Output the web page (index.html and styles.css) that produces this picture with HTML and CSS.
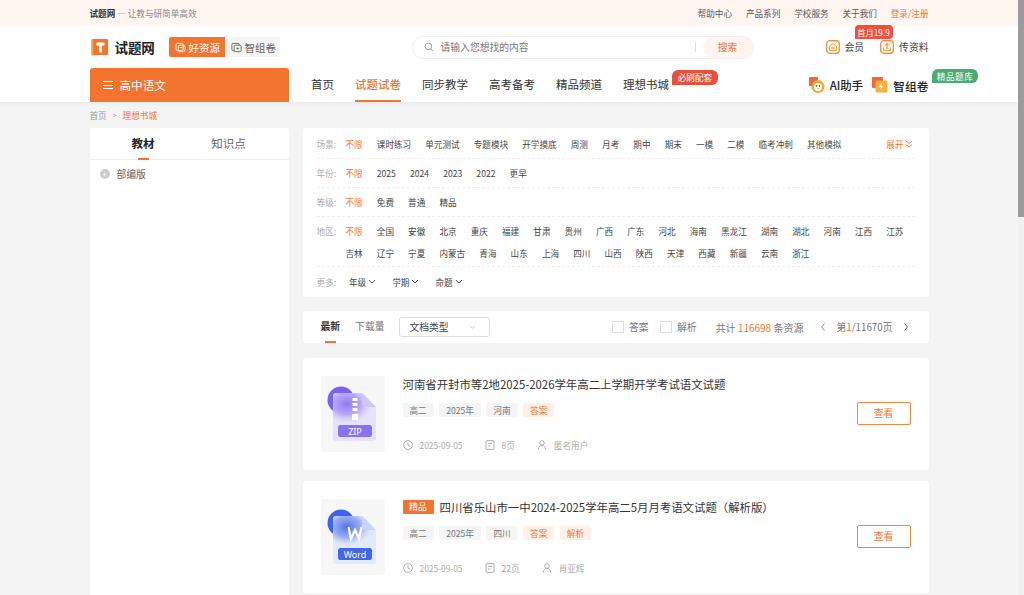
FILE: index.html
```html
<!DOCTYPE html>
<html lang="zh-CN">
<head>
<meta charset="utf-8">
<title>试题网</title>
<link rel="stylesheet" href="styles.css">
</head>
<body>
<div class="page">
  <div class="topbar"><div class="wrap topbar-in">
    <div class="slogan"><b>试题网</b> — 让教与研简单高效</div>
    <div class="toplinks"><span>帮助中心</span><span>产品系列</span><span>学校服务</span><span>关于我们</span><span class="orange">登录/注册</span></div>
  </div></div>

  <header class="head"><div class="wrap head-in">
    <svg class="logo" viewBox="0 0 18 18"><rect x="0" y="1" width="5" height="16.500" rx="1" fill="#f6b13d"/><rect x="2" y="1" width="15" height="16" rx="1" fill="#f2742f"/><path d="M5.500 4.500h8v3h-2.600v7H8.100v-7H5.500z" fill="#fff"/></svg>
    <span class="brand">试题网</span>
    <div class="switch">
      <span class="sw on"><svg viewBox="0 0 12 12" class="swi"><rect x="1" y="1.500" width="8" height="8" rx="2" fill="none" stroke="#fff" stroke-width="1"/><rect x="3.500" y="3.500" width="7.500" height="7" rx="2" fill="none" stroke="#fff" stroke-width="1"/><path d="M5 6h4" stroke="#fff"/></svg>好资源</span>
      <span class="sw"><svg viewBox="0 0 12 12" class="swi"><rect x="1" y="1.500" width="8" height="8" rx="1" fill="none" stroke="#666" stroke-width="1"/><rect x="3.500" y="3.500" width="7.500" height="7" rx="1" fill="#f5f5f5" stroke="#666" stroke-width="1"/><path d="M6 7h2.500M7.200 5.800v2.400" stroke="#666"/></svg>智组卷</span>
    </div>
    <div class="search">
      <svg class="sicon" viewBox="0 0 12 12"><circle cx="5.300" cy="5.300" r="4" fill="none" stroke="#888" stroke-width="1"/><path d="M8.300 8.300l2.500 2.500" stroke="#888" stroke-width="1"/></svg>
      <span class="ph">请输入您想找的内容</span>
      <i class="sep"></i>
      <span class="sbtn">搜索</span>
    </div>
    <div class="actions">
      <span class="act vip"><svg class="acti" viewBox="0 0 14 14"><rect x=".7" y=".7" width="12.600" height="12.600" rx="3" fill="#fff7ec" stroke="#f2853f" stroke-width="1.200"/><path d="M3.500 6L7 3.500 10.500 6v4.500h-7z" fill="none" stroke="#f0a93b"/><path d="M5.500 8h3" stroke="#f2742f"/></svg>会员<em class="bdg-red">首月19.9</em></span>
      <span class="act"><svg class="acti" viewBox="0 0 14 14"><rect x=".7" y=".7" width="12.600" height="12.600" rx="3" fill="#fff7ec" stroke="#f2853f" stroke-width="1.200"/><path d="M7 9V3.800M5 5.500l2-2 2 2" fill="none" stroke="#f2742f"/><path d="M3.500 7.500v3h7v-3" fill="none" stroke="#f0a93b"/></svg>传资料</span>
    </div>
  </div></header>

  <nav class="nav"><div class="wrap nav-in">
    <div class="cat"><span class="burger"><i></i><i></i><i></i></span>高中语文</div>
    <div class="menu">
      <span>首页</span><span class="active">试题试卷</span><span>同步教学</span><span>高考备考</span><span>精品频道</span><span class="hasb">理想书城<em class="bdg-must">必刷配套</em></span>
    </div>
    <div class="tools">
      <span class="tool t1"><svg class="tooli" viewBox="0 0 16 16"><rect x="0" y="0" width="9" height="9" rx="1" fill="#ef6a3a"/><circle cx="9" cy="9.500" r="6.500" fill="#f8a72c"/><circle cx="9" cy="10" r="4" fill="#fff"/><circle cx="7.500" cy="9" r=".8" fill="#333"/><circle cx="10.500" cy="9" r=".8" fill="#333"/><path d="M8 11h2l-1 1.300z" fill="#f2742f"/></svg>AI助手</span>
      <span class="tool t2"><svg class="tooli" viewBox="0 0 16 16"><rect x="0" y="0" width="11" height="11" rx="1" fill="#ef6a3a"/><rect x="3.500" y="3.500" width="12" height="12" rx="1.500" fill="#f6b13d"/><path d="M10 6l-3 4h2l-1 3 3-4H9z" fill="#fff"/></svg>智组卷<em class="bdg-green">精品题库</em></span>
    </div>
  </div></nav>

  <main class="wrap">
    <div class="crumb"><span>首页</span><span class="gt">&gt;</span><span class="orange">理想书城</span></div>
    <div class="cols">
      <aside class="side">
        <div class="tabs"><span class="tab on">教材</span><span class="tab">知识点</span></div>
        <div class="tree"><i class="dot">+</i>部编版</div>
      </aside>
      <section class="content">
        <div class="filters">
          <div class="frow"><span class="flabel">场景:</span><div class="fitems"><span class="orange">不限</span><span>课时练习</span><span>单元测试</span><span>专题模块</span><span>开学摸底</span><span>周测</span><span>月考</span><span>期中</span><span>期末</span><span>一模</span><span>二模</span><span>临考冲刺</span><span>其他模拟</span></div><span class="expand">展开 <svg viewBox="0 0 8 8" class="dbl"><path d="M1 1l3 2.500L7 1M1 4.500L4 7l3-2.500" fill="none" stroke="#f2742f" stroke-width=".9"/></svg></span></div>
          <div class="frow"><span class="flabel">年份:</span><div class="fitems"><span class="orange">不限</span><span>2025</span><span>2024</span><span>2023</span><span>2022</span><span>更早</span></div></div>
          <div class="frow"><span class="flabel">等级:</span><div class="fitems"><span class="orange">不限</span><span>免费</span><span>普通</span><span>精品</span></div></div>
          <div class="frow"><span class="flabel">地区:</span><div class="fitems"><span class="orange">不限</span><span>全国</span><span>安徽</span><span>北京</span><span>重庆</span><span>福建</span><span>甘肃</span><span>贵州</span><span>广西</span><span>广东</span><span>河北</span><span>海南</span><span>黑龙江</span><span>湖南</span><span>湖北</span><span>河南</span><span>江西</span><span>江苏</span><span>吉林</span><span>辽宁</span><span>宁夏</span><span>内蒙古</span><span>青海</span><span>山东</span><span>上海</span><span>四川</span><span>山西</span><span>陕西</span><span>天津</span><span>西藏</span><span>新疆</span><span>云南</span><span>浙江</span></div></div>
          <div class="frow last"><span class="flabel">更多:</span><div class="fmore"><span>年级<svg class="chev" viewBox="0 0 8 6"><path d="M1 1l3 3 3-3" fill="none" stroke="#555"/></svg></span><span>学期<svg class="chev" viewBox="0 0 8 6"><path d="M1 1l3 3 3-3" fill="none" stroke="#555"/></svg></span><span>命题<svg class="chev" viewBox="0 0 8 6"><path d="M1 1l3 3 3-3" fill="none" stroke="#555"/></svg></span></div></div>
        </div>

        <div class="sortbar">
          <span class="sort on">最新</span><span class="sort">下载量</span>
          <div class="select">文档类型<svg class="chev2" viewBox="0 0 8 6"><path d="M1 1l3 3 3-3" fill="none" stroke="#aaa" stroke-width=".8"/></svg></div>
          <div class="sort-r">
            <label class="chk"><i></i>答案</label>
            <label class="chk"><i></i>解析</label>
            <span class="total">共计 <b>116698</b> 条资源</span>
            <span class="pager"><svg class="arr" viewBox="0 0 6 10"><path d="M4.500 1.500L1.500 5l3 3.500" fill="none" stroke="#888"/></svg><span>第<b>1</b>/11670页</span><svg class="arr" viewBox="0 0 6 10"><path d="M1.500 1.500L4.500 5l-3 3.500" fill="none" stroke="#666"/></svg></span>
          </div>
        </div>

        <article class="card">
          <div class="thumb">
            <svg viewBox="0 0 64 76" class="thumbsvg"><defs><radialGradient id="zg" cx=".5" cy=".5" r=".5"><stop offset="0" stop-color="#8d76f3"/><stop offset=".55" stop-color="#a794f6" stop-opacity=".75"/><stop offset="1" stop-color="#c9bffa" stop-opacity="0"/></radialGradient><clipPath id="zc"><path d="M15 17h26l14 14v31a3 3 0 0 1-3 3H15a3 3 0 0 1-3-3V20a3 3 0 0 1 3-3z"/></clipPath></defs><circle cx="20" cy="24" r="13.500" fill="#7b63f0"/><path d="M15 17h26l14 14v31a3 3 0 0 1-3 3H15a3 3 0 0 1-3-3V20a3 3 0 0 1 3-3z" fill="#e6e2fc"/><g clip-path="url(#zc)"><ellipse cx="26" cy="28" rx="25" ry="19" fill="url(#zg)"/></g><path d="M41 17l14 14H44a3 3 0 0 1-3-3z" fill="#cfc6f8"/><path d="M31.500 22h5v3h-5zM31.500 27h5v3h-5zM31.500 32h5v3h-5zM31 38h6v6h-6z" fill="#fff"/><rect x="17" y="49" width="34" height="12" rx="2.500" fill="#8a72f2"/><text x="34" y="58.500" class="ftxt">ZIP</text></svg>
          </div>
          <div class="info">
            <h3 class="title">河南省开封市等2地2025-2026学年高二上学期开学考试语文试题</h3>
            <div class="tags"><span>高二</span><span>2025年</span><span>河南</span><span class="hot">答案</span></div>
            <div class="meta">
              <span class="m m1"><svg class="mi" viewBox="0 0 10 10"><circle cx="5" cy="5" r="4.400" fill="none" stroke="#999" stroke-width=".8"/><path d="M5 2.500V5.300l2 1" fill="none" stroke="#999" stroke-width=".8"/></svg>2025-09-05</span>
              <span class="m m2"><svg class="mi" viewBox="0 0 10 10"><rect x="1" y=".6" width="8" height="8.800" rx="1" fill="none" stroke="#999" stroke-width=".8"/><path d="M3 3.500h4M3 6h2.500" stroke="#999" stroke-width=".8"/></svg>8页</span>
              <span class="m"><svg class="mi" viewBox="0 0 10 10"><circle cx="5" cy="3" r="2.300" fill="none" stroke="#999" stroke-width=".8"/><path d="M1.200 9.500c.3-2.600 1.800-4 3.800-4s3.500 1.400 3.800 4" fill="none" stroke="#999" stroke-width=".8"/></svg>匿名用户</span>
            </div>
          </div>
          <span class="view">查看</span>
        </article>

        <article class="card card2">
          <div class="thumb">
            <svg viewBox="0 0 64 76" class="thumbsvg"><defs><radialGradient id="wg" cx=".5" cy=".5" r=".5"><stop offset="0" stop-color="#4d70ea"/><stop offset=".55" stop-color="#7f98f0" stop-opacity=".75"/><stop offset="1" stop-color="#bccafa" stop-opacity="0"/></radialGradient><clipPath id="wc"><path d="M15 17h26l14 14v31a3 3 0 0 1-3 3H15a3 3 0 0 1-3-3V20a3 3 0 0 1 3-3z"/></clipPath></defs><circle cx="20" cy="24" r="13.500" fill="#3f63e8"/><path d="M15 17h26l14 14v31a3 3 0 0 1-3 3H15a3 3 0 0 1-3-3V20a3 3 0 0 1 3-3z" fill="#e3e9fd"/><g clip-path="url(#wc)"><ellipse cx="26" cy="28" rx="25" ry="19" fill="url(#wg)"/></g><path d="M41 17l14 14H44a3 3 0 0 1-3-3z" fill="#c9d4f9"/><path d="M27.500 28l2.500 12 4-9 4 9 2.500-12" fill="none" stroke="#fff" stroke-width="2.200"/><rect x="17" y="49" width="34" height="12" rx="2.500" fill="#4467ea"/><text x="34" y="58.500" class="ftxt">Word</text></svg>
          </div>
          <div class="info">
            <h3 class="title"><em class="prem">精品</em>四川省乐山市一中2024-2025学年高二5月月考语文试题（解析版）</h3>
            <div class="tags"><span>高二</span><span>2025年</span><span>四川</span><span class="hot">答案</span><span class="hot">解析</span></div>
            <div class="meta">
              <span class="m m1"><svg class="mi" viewBox="0 0 10 10"><circle cx="5" cy="5" r="4.400" fill="none" stroke="#999" stroke-width=".8"/><path d="M5 2.500V5.300l2 1" fill="none" stroke="#999" stroke-width=".8"/></svg>2025-09-05</span>
              <span class="m m2"><svg class="mi" viewBox="0 0 10 10"><rect x="1" y=".6" width="8" height="8.800" rx="1" fill="none" stroke="#999" stroke-width=".8"/><path d="M3 3.500h4M3 6h2.500" stroke="#999" stroke-width=".8"/></svg>22页</span>
              <span class="m"><svg class="mi" viewBox="0 0 10 10"><circle cx="5" cy="3" r="2.300" fill="none" stroke="#999" stroke-width=".8"/><path d="M1.200 9.500c.3-2.600 1.800-4 3.800-4s3.500 1.400 3.800 4" fill="none" stroke="#999" stroke-width=".8"/></svg>肖亚辉</span>
            </div>
          </div>
          <span class="view">查看</span>
        </article>
      </section>
    </div>
  </main>
</div>
<div class="scrollbar"><div class="thumbbar"></div></div>
</body>
</html>
```
FILE: styles.css
```css
* { box-sizing: border-box; }
html, body { margin: 0; height: 595px; overflow: hidden; }
body { display: flex; font-family: "Noto Sans CJK SC", "Noto Sans", sans-serif; color: #333; background: #f4f4f4; }
em, i { font-style: normal; }
.page { flex: 1; min-width: 0; height: 595px; overflow: hidden; }
.scrollbar { width: 6px; flex: none; background: #f1f1f1; }
.thumbbar { height: 217px; background: #9b9b9b; }
.wrap { width: 839px; margin: 0 auto; }
.orange { color: #f2742f; }

.topbar { height: 26px; background: #fff5f1; }
.topbar-in { display: flex; justify-content: space-between; align-items: center; height: 26px; }
.slogan { font-size: 8.600px; color: #888; }
.slogan b { color: #333; }
.toplinks { display: flex; gap: 13.900px; font-size: 8.600px; color: #555; }

.head { height: 42px; background: #fff; }
.head-in { display: flex; align-items: center; height: 42px; }
.logo { width: 18px; height: 18px; margin-left: 1px; }
.brand { font-size: 13.500px; font-weight: 700; color: #222; margin-left: 6px; width: 54px; letter-spacing: -.1px; }
.switch { display: flex; height: 20px; }
.sw { display: flex; align-items: center; gap: 3px; width: 55px; padding-left: 6px; font-size: 10.500px; color: #666; background: #f5f5f5; border-radius: 0 2px 2px 0; }
.sw.on { width: 56px; color: #fff; background: #f2742f; border-radius: 2px 0 0 2px; }
.swi { width: 11px; height: 11px; flex: none; }
.search { display: flex; align-items: center; width: 342px; height: 23px; margin-left: 132px; border: 1px solid #eee; border-radius: 12px; }
.sicon { width: 10px; height: 10px; margin-left: 11px; }
.ph { flex: 1; margin-left: 7px; font-size: 9.800px; color: #777; }
.sep { width: 1px; height: 10px; background: #ddd; }
.sbtn { width: 50px; height: 21px; margin-left: 7px; font-size: 9.800px; line-height: 20px; text-align: center; color: #f2742f; background: #fff4ee; border-radius: 11px; }
.actions { display: flex; gap: 16px; margin-left: 72px; }
.act { position: relative; display: flex; align-items: center; gap: 5px; font-size: 9.800px; color: #444; }
.acti { width: 14px; height: 14px; }
.bdg-red { position: absolute; left: 29px; top: -15px; width: 38px; height: 14px; font-size: 8.300px; line-height: 14px; text-align: center; color: #fff; background: #ee4f3e; border-radius: 4px 4px 4px 0; white-space: nowrap; }

.nav { position: relative; height: 34px; background: #fff; box-shadow: 0 1px 4px rgba(0,0,0,.06); }
.nav-in { display: flex; height: 34px; }
.cat { display: flex; align-items: center; width: 199px; padding-left: 13px; font-size: 11.600px; color: #fff; background: #f2742f; border-radius: 3px 3px 0 0; }
.burger { display: flex; flex-direction: column; gap: 2.500px; width: 10px; margin-right: 7px; }
.burger i { height: 1px; background: #fff; }
.menu { display: flex; gap: 21px; margin-left: 22.400px; font-size: 11.500px; color: #333; }
.menu > span { position: relative; line-height: 33px; }
.menu .active { color: #f2742f; font-weight: 500; border-bottom: 2px solid #f2742f; height: 34px; }
.bdg-must { position: absolute; left: 49px; top: 2px; width: 46px; height: 15px; font-size: 8.600px; line-height: 15px; text-align: center; color: #fff; background: #e9503c; border-radius: 6px 6px 6px 0; white-space: nowrap; }
.tools { display: flex; align-items: center; gap: 9px; margin-left: auto; }
.tool { position: relative; display: flex; align-items: center; gap: 5px; font-weight: 500; color: #222; }
.t1 { font-size: 11.400px; }
.t2 { font-size: 11.800px; }
.tooli { width: 16px; height: 16px; }
.bdg-green { position: absolute; left: 60px; top: -8px; width: 46px; height: 14px; font-size: 8.600px; font-weight: 400; line-height: 14px; letter-spacing: .6px; text-align: center; color: #fff; background: #4caa75; border-radius: 6px 6px 6px 0; white-space: nowrap; }

.crumb { display: flex; align-items: center; gap: 6px; height: 26px; font-size: 8.600px; color: #999; }
.gt { font-size: 7px; }
.cols { display: flex; gap: 14px; }
.side { width: 199px; height: 500px; flex: none; background: #fff; border-radius: 3px 3px 0 0; }
.tabs { display: flex; height: 32px; border-bottom: 1px solid #eee; }
.tab { position: relative; font-size: 11.500px; line-height: 31px; text-align: center; color: #666; }
.tabs .tab:first-child { flex: 0 0 107px; }
.tabs .tab:last-child { flex: 0 0 64px; }
.tab.on { font-weight: 700; color: #222; }
.tab.on::after { content: ""; position: absolute; left: 48px; bottom: -1px; width: 11px; height: 2px; background: #f2742f; }
.tree { display: flex; align-items: center; height: 27px; padding-left: 10px; font-size: 9.800px; color: #666; }
.dot { width: 10px; height: 10px; margin-right: 7px; font-size: 8px; line-height: 10px; text-align: center; color: #fff; background: #ccc; border-radius: 50%; }

.content { flex: 1; min-width: 0; }
.filters { height: 169px; padding: 0 14px; background: #fff; border-radius: 3px; }
.frow { position: relative; display: flex; align-items: flex-start; width: 598px; height: 29px; padding-top: 6px; border-bottom: 1px dashed #eee; font-size: 8.600px; line-height: 16px; }
.frow:nth-child(1) { height: 31px; padding-top: 8px; }
.frow:nth-child(4) { height: 50px; }
.frow.last { border-bottom: 0; padding-top: 7px; }
.flabel { width: 29px; flex: none; color: #aaa; }
.fitems { display: flex; flex-wrap: wrap; gap: 6px 14.100px; width: 566px; color: #444; }
.expand { position: absolute; right: 2px; top: 8px; display: flex; align-items: center; gap: 1px; color: #f2742f; }
.dbl { width: 8px; height: 8px; }
.fmore { display: flex; gap: 16px; margin-left: 3.500px; color: #444; }
.fmore span { display: flex; align-items: center; gap: 2px; }
.chev { width: 8px; height: 6px; }

.sortbar { display: flex; align-items: center; height: 32px; margin-top: 14px; padding-left: 18px; font-size: 9.800px; color: #777; background: #fff; border-radius: 3px; }
.sort { position: relative; height: 32px; margin-right: 15px; line-height: 31px; }
.sort.on { font-weight: 700; color: #333; }
.sort.on::after { content: ""; position: absolute; left: 4px; bottom: 0; width: 11px; height: 2px; background: #f2742f; }
.select { display: flex; align-items: center; justify-content: space-between; width: 91px; height: 20px; padding: 0 9px; color: #444; border: 1px solid #ddd; border-radius: 3px; }
.chev2 { width: 7px; height: 5px; margin-right: 4px; }
.sort-r { display: flex; align-items: center; margin-left: auto; padding-right: 20px; }
.chk { display: flex; align-items: center; gap: 5px; margin-right: 11.500px; }
.chk i { width: 12px; height: 12px; border: 1px solid #ddd; border-radius: 1px; }
.chk:nth-child(2) { margin-right: 19px; }
.total { margin-right: 17px; font-size: 10px; }
.total b, .pager b { font-weight: 400; color: #f2742f; }
.pager { display: flex; align-items: center; gap: 10px; }
.arr { width: 6px; height: 10px; }

.card { display: flex; height: 112px; margin-top: 15px; padding: 18px; background: #fff; border-radius: 3px; }
.card2 { margin-top: 11px; }
.thumb { width: 64px; height: 76px; flex: none; background: #f7f7f7; border-radius: 3px; }
.thumbsvg { display: block; width: 64px; height: 76px; }
.ftxt { font-family: "Noto Sans", sans-serif; font-size: 9px; fill: #fff; text-anchor: middle; }
.info { flex: 1; margin-left: 18px; }
.title { display: flex; align-items: center; height: 18px; margin: -1px 0 0; font-size: 11.400px; font-weight: 400; line-height: 18px; color: #333; }
.prem { width: 31px; height: 14px; margin-right: 6px; font-size: 9px; line-height: 14px; text-align: center; color: #fff; background: #f2742f; border-radius: 1px; }
.tags { display: flex; gap: 5.500px; margin-top: 10px; }
.tags span { height: 14px; padding: 0 7px; font-size: 8.600px; line-height: 14px; color: #777; background: #f5f5f5; border-radius: 2px; }
.tags .hot { color: #f2742f; background: #fff0e8; }
.meta { display: flex; align-items: center; margin-top: 22px; font-size: 8.600px; color: #aaa; }
.m { display: flex; align-items: center; gap: 7px; }
.m1 { margin-right: 22px; font-size: 8.400px; }
.m2 { margin-right: 22px; }
.mi { width: 10px; height: 10px; }
.view { align-self: flex-start; width: 54px; height: 23px; margin-top: 26px; font-size: 9.800px; line-height: 21px; text-align: center; color: #f2742f; border: 1px solid #f2853f; border-radius: 2px; }
```
